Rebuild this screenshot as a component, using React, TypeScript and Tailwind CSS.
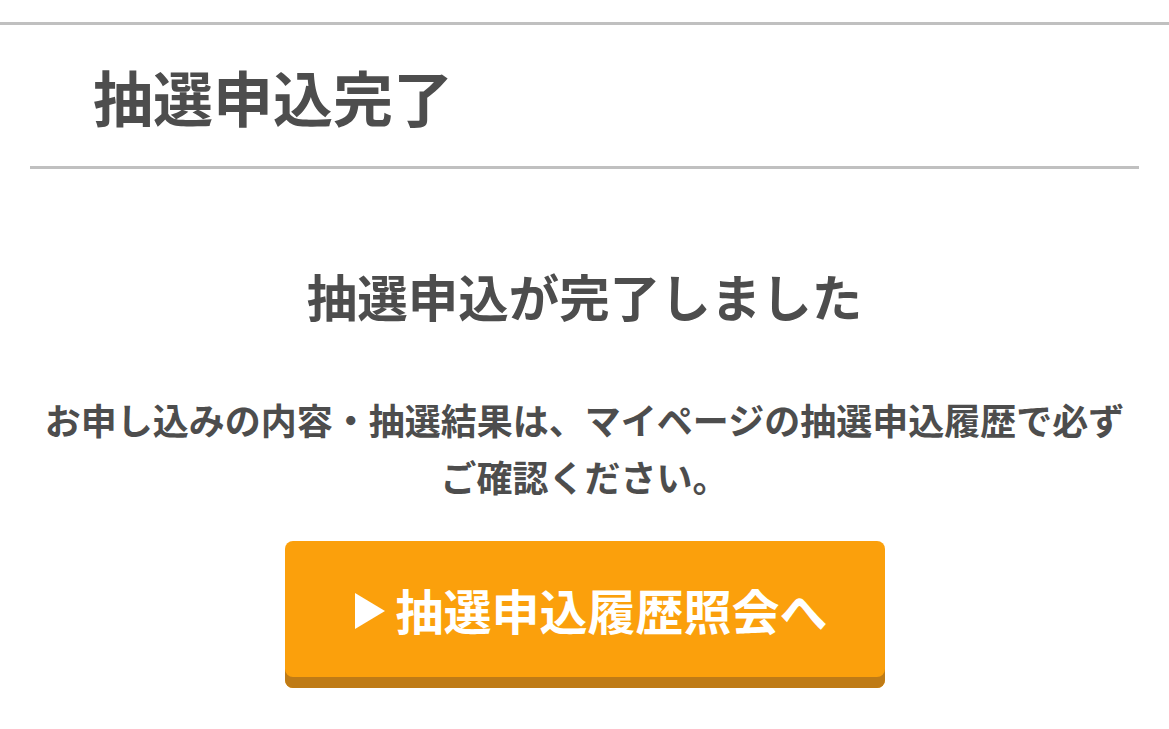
export default function App() {
  return (
    <div
      className="w-[1169px] h-[729px] bg-white overflow-hidden text-[#4d4d4d]"
      style={{ fontFamily: '"Noto Sans CJK JP", "Noto Sans", sans-serif' }}
    >
      <div className="h-[22px]" />
      <div className="h-[3px] bg-[#c0c0c0]" />
      <div className="h-[141px] flex items-center pl-[93px]">
        <h1 className="text-[60px] font-bold leading-none tracking-[0px]">抽選申込完了</h1>
      </div>
      <div className="mx-[30px] h-[3px] bg-[#c0c0c0]" />
      <div className="flex flex-col items-center">
        <h2 className="mt-[96px] text-[50.5px] font-bold leading-[60px]">抽選申込が完了しました</h2>
        <p className="mt-[66px] text-[36px] font-bold leading-[57px] text-center whitespace-nowrap">
          お申し込みの内容・抽選結果は、マイページの抽選申込履歴で必ず
          <br />
          ご確認ください。
        </p>
        <button className="mt-[36px] w-[600px] h-[147px] rounded-[8px] bg-[#fba00c] shadow-[0_-11px_0_0_#bf7b16_inset] flex items-center justify-center text-white text-[48px] font-bold pb-[11px] pl-[14px]">
          <svg width="30" height="36" viewBox="0 0 30 36" className="mr-[10px] mt-[4px]">
            <path d="M0 0 L30 18 L0 36 Z" fill="#ffffff" />
          </svg>
          <span>抽選申込履歴照会へ</span>
        </button>
      </div>
    </div>
  );
}
